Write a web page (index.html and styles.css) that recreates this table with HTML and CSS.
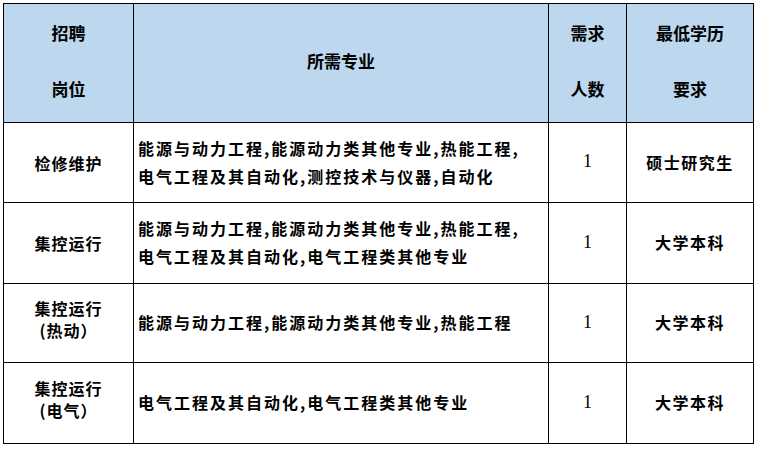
FILE: index.html
```html
<!DOCTYPE html>
<html lang="zh-CN">
<head>
<meta charset="utf-8">
<title>招聘岗位</title>
<link rel="stylesheet" href="styles.css">
</head>
<body>
<table class="jobs">
  <colgroup>
    <col class="c-post">
    <col class="c-major">
    <col class="c-num">
    <col class="c-edu">
  </colgroup>
  <thead>
    <tr class="head-row">
      <th class="two"><span>招聘</span><span>岗位</span></th>
      <th>所需专业</th>
      <th class="two"><span>需求</span><span>人数</span></th>
      <th class="two"><span>最低学历</span><span>要求</span></th>
    </tr>
  </thead>
  <tbody>
    <tr class="r1">
      <td class="post">检修维护</td>
      <td class="major">能源与动力工程,能源动力类其他专业,热能工程,<br>电气工程及其自动化,测控技术与仪器,自动化</td>
      <td class="num">1</td>
      <td class="edu">硕士研究生</td>
    </tr>
    <tr class="r2">
      <td class="post">集控运行</td>
      <td class="major">能源与动力工程,能源动力类其他专业,热能工程,<br>电气工程及其自动化,电气工程类其他专业</td>
      <td class="num">1</td>
      <td class="edu">大学本科</td>
    </tr>
    <tr class="r3">
      <td class="post two-line"><span class="ln">集控运行</span><span class="ln">(热动）</span></td>
      <td class="major">能源与动力工程,能源动力类其他专业,热能工程</td>
      <td class="num">1</td>
      <td class="edu">大学本科</td>
    </tr>
    <tr class="r4">
      <td class="post two-line"><span class="ln">集控运行</span><span class="ln">(电气）</span></td>
      <td class="major">电气工程及其自动化,电气工程类其他专业</td>
      <td class="num">1</td>
      <td class="edu">大学本科</td>
    </tr>
  </tbody>
</table>
</body>
</html>
```

FILE: styles.css
```css
html, body {
  margin: 0;
  padding: 0;
  background: #ffffff;
}

body {
  padding: 3px 0 0 3px;
}

.jobs {
  border-collapse: collapse;
  table-layout: fixed;
  width: 750px;
  color: #000;
  font-family: "Noto Sans CJK SC", "Noto Sans", sans-serif;
}

.c-post { width: 130px; }
.c-major { width: 415px; }
.c-num { width: 78px; }
.c-edu { width: 127px; }

.jobs th,
.jobs td {
  border: 1px solid #000;
  padding: 0;
  vertical-align: middle;
  text-align: center;
}

.head-row { height: 119px; }
.r1 { height: 80px; }
.r2 { height: 81px; }
.r3 { height: 79px; }
.r4 { height: 81px; }

.jobs th {
  background: #bdd7ee;
  font-size: 17px;
  font-weight: 700;
  line-height: 56px;
  padding-bottom: 4px;
}

.jobs th.two span {
  display: block;
}

.post {
  font-size: 16px;
  font-weight: 700;
  letter-spacing: 1px;
  padding-left: 1px;
}

.post.two-line {
  padding-bottom: 9px;
}

.post.two-line .ln {
  display: block;
  line-height: 22px;
}

.major {
  text-align: left !important;
  padding-left: 4px !important;
  font-size: 16px;
  font-weight: 700;
  letter-spacing: 2px;
  line-height: 28px;
  padding-bottom: 2px !important;
}

.num {
  font-family: "Liberation Serif", serif;
  font-size: 18px;
  padding-bottom: 2px !important;
}

.edu {
  font-size: 16px;
  font-weight: 700;
  letter-spacing: 1.5px;
  padding-left: 2px;
  padding-bottom: 2px !important;
}
```
